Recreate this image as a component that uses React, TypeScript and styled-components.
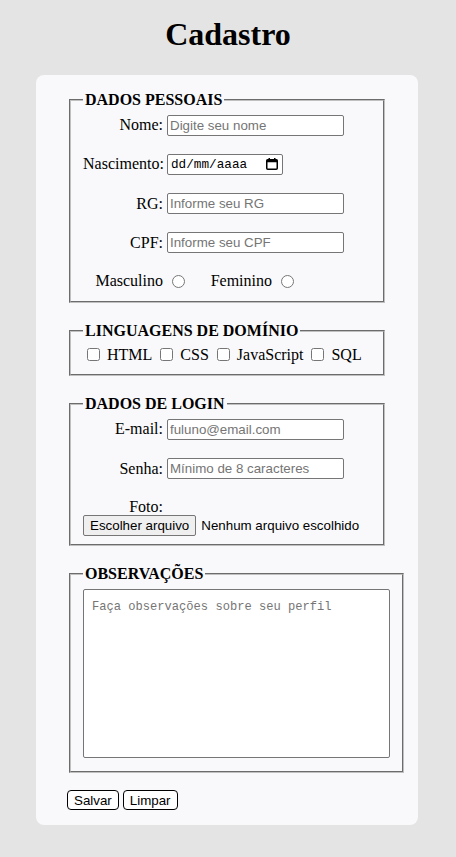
import React from "react";
import styled, { createGlobalStyle } from "styled-components";

const Global = createGlobalStyle`
  html, body { margin: 0; padding: 0; }
  body {
    background: #e4e4e4;
    font-family: "Liberation Serif", "Times New Roman", serif;
    font-size: 16px;
    color: #000;
  }
`;

const Page = styled.div`
  display: flex;
  flex-direction: column;
  padding-bottom: 32px;
`;

const Title = styled.h1`
  margin: 16px 0 0;
  text-align: center;
  font-size: 32px;
  line-height: 36px;
  font-weight: bold;
`;

const Card = styled.form`
  margin: 23px 0 0 36px;
  width: 382px;
  box-sizing: border-box;
  padding: 16px 31px 15px;
  background: #f9f9fb;
  border-radius: 8px;
  display: flex;
  flex-direction: column;
  gap: 19px;
`;

const Fieldset = styled.fieldset<{ $padBottom?: number }>`
  margin: 0 2px;
  padding: 5.6px 12px ${(p) => p.$padBottom ?? 10}px;
  border: 2px groove rgb(192, 192, 192);
`;

const Legend = styled.legend`
  padding: 0 2px;
  font-weight: bold;
  font-size: 16px;
  line-height: 18px;
`;

const Rows = styled.div`
  display: flex;
  flex-direction: column;
  gap: 18.3px;
`;

const Row = styled.div`
  display: flex;
  align-items: center;
  height: 21px;
  gap: 4px;
`;

const Label = styled.label`
  flex-shrink: 0;
  width: 80px;
  text-align: right;
  font-size: 16px;
  line-height: 18px;
`;

const TextInput = styled.input`
  box-sizing: border-box;
  width: 177px;
  height: 21px;
  margin: 0;
  padding: 1px 2px;
  border: 1px solid #767676;
  border-radius: 2px;
  background: #fff;
  font-family: "Liberation Sans", Arial, sans-serif;
  font-size: 13.33px;
  color: #000;
  &::placeholder { color: #757575; }
`;

const DateBox = styled.div`
  box-sizing: border-box;
  width: 116px;
  height: 21px;
  display: flex;
  align-items: center;
  justify-content: space-between;
  padding: 0 4px 0 3px;
  border: 1px solid #767676;
  border-radius: 2px;
  background: #fff;
`;

const DateText = styled.span`
  font-family: "Liberation Mono", "DejaVu Sans Mono", monospace;
  font-size: 12.7px;
  line-height: 15px;
  color: #000;
`;

const RadioRow = styled.div`
  display: flex;
  align-items: center;
  height: 19px;
`;

const RadioLabel = styled(Label)<{ $first?: boolean }>`
  margin-left: ${(p) => (p.$first ? 0 : 4)}px;
`;

const Radio = styled.input`
  width: 13px;
  height: 13px;
  margin: 0 3px 0 9px;
`;

const Checks = styled.div`
  display: flex;
  align-items: center;
  gap: 4px;
  height: 19px;
`;

const Check = styled.input`
  width: 13px;
  height: 13px;
  margin: 3px 3px 3px 4px;
`;

const CheckText = styled.label`
  font-size: 16px;
  line-height: 18px;
`;

const FotoGroup = styled.div`
  display: flex;
  flex-direction: column;
`;

const FotoLabel = styled(Label)`
  height: 18px;
`;

const FileRow = styled.div`
  display: flex;
  align-items: center;
  gap: 5px;
  height: 21px;
  margin-top: -1px;
`;

const FileButton = styled.button`
  box-sizing: border-box;
  height: 21px;
  margin: 0;
  padding: 1px 6px;
  background: #efefef;
  border: 1px solid #767676;
  border-radius: 2px;
  font-family: "Liberation Sans", Arial, sans-serif;
  font-size: 13.33px;
  color: #000;
`;

const FileText = styled.span`
  font-family: "Liberation Sans", Arial, sans-serif;
  font-size: 13.33px;
  color: #000;
`;

const TextArea = styled.textarea`
  display: block;
  box-sizing: border-box;
  width: 307px;
  height: 169px;
  margin: 1px 0 3px;
  padding: 10px 8px 8px;
  border: 1px solid #767676;
  border-radius: 2px;
  background: #fff;
  resize: none;
  font-family: "Liberation Mono", "DejaVu Sans Mono", monospace;
  font-size: 12.1px;
  line-height: 15px;
  &::placeholder { color: #757575; }
`;

const Actions = styled.div`
  display: flex;
  gap: 4px;
  margin-top: -2px;
`;

const ActionButton = styled.button`
  box-sizing: border-box;
  height: 20px;
  margin: 0;
  padding: 1px 6px;
  background: #fff;
  border: 1px solid #000;
  border-radius: 4px;
  font-family: "Liberation Sans", Arial, sans-serif;
  font-size: 13.33px;
  color: #000;
`;

const CalendarIcon = () => (
  <svg width="12" height="12" viewBox="0 0 12 12" aria-hidden="true">
    <rect x="0.75" y="1.75" width="10.5" height="9.5" rx="1" fill="none" stroke="#000" strokeWidth="1.5" />
    <rect x="0.75" y="1.75" width="10.5" height="2.5" fill="#000" />
    <rect x="2.5" y="0" width="1.5" height="2.5" fill="#000" />
    <rect x="8" y="0" width="1.5" height="2.5" fill="#000" />
  </svg>
);

export default function App() {
  return (
    <Page>
      <Global />
      <Title>Cadastro</Title>
      <Card onSubmit={(e) => e.preventDefault()}>
        <Fieldset>
          <Legend>DADOS PESSOAIS</Legend>
          <Rows>
            <Row>
              <Label htmlFor="nome">Nome:</Label>
              <TextInput id="nome" type="text" placeholder="Digite seu nome" />
            </Row>
            <Row>
              <Label>Nascimento:</Label>
              <DateBox>
                <DateText>dd/mm/aaaa</DateText>
                <CalendarIcon />
              </DateBox>
            </Row>
            <Row>
              <Label htmlFor="rg">RG:</Label>
              <TextInput id="rg" type="text" placeholder="Informe seu RG" />
            </Row>
            <Row>
              <Label htmlFor="cpf">CPF:</Label>
              <TextInput id="cpf" type="text" placeholder="Informe seu CPF" />
            </Row>
            <RadioRow>
              <RadioLabel $first htmlFor="masc">Masculino</RadioLabel>
              <Radio id="masc" type="radio" name="sexo" />
              <RadioLabel htmlFor="fem">Feminino</RadioLabel>
              <Radio id="fem" type="radio" name="sexo" />
            </RadioRow>
          </Rows>
        </Fieldset>

        <Fieldset>
          <Legend>LINGUAGENS DE DOMÍNIO</Legend>
          <Checks>
            <Check id="html" type="checkbox" />
            <CheckText htmlFor="html">HTML</CheckText>
            <Check id="css" type="checkbox" />
            <CheckText htmlFor="css">CSS</CheckText>
            <Check id="js" type="checkbox" />
            <CheckText htmlFor="js">JavaScript</CheckText>
            <Check id="sql" type="checkbox" />
            <CheckText htmlFor="sql">SQL</CheckText>
          </Checks>
        </Fieldset>

        <Fieldset $padBottom={8}>
          <Legend>DADOS DE LOGIN</Legend>
          <Rows>
            <Row>
              <Label htmlFor="email">E-mail:</Label>
              <TextInput id="email" type="text" placeholder="fuluno@email.com" />
            </Row>
            <Row>
              <Label htmlFor="senha">Senha:</Label>
              <TextInput id="senha" type="password" placeholder="Mínimo de 8 caracteres" />
            </Row>
            <FotoGroup>
              <FotoLabel>Foto:</FotoLabel>
              <FileRow>
                <FileButton type="button">Escolher arquivo</FileButton>
                <FileText>Nenhum arquivo escolhido</FileText>
              </FileRow>
            </FotoGroup>
          </Rows>
        </Fieldset>

        <Fieldset $padBottom={10}>
          <Legend>OBSERVAÇÕES</Legend>
          <TextArea placeholder="Faça observações sobre seu perfil" />
        </Fieldset>

        <Actions>
          <ActionButton type="submit">Salvar</ActionButton>
          <ActionButton type="reset">Limpar</ActionButton>
        </Actions>
      </Card>
    </Page>
  );
}
